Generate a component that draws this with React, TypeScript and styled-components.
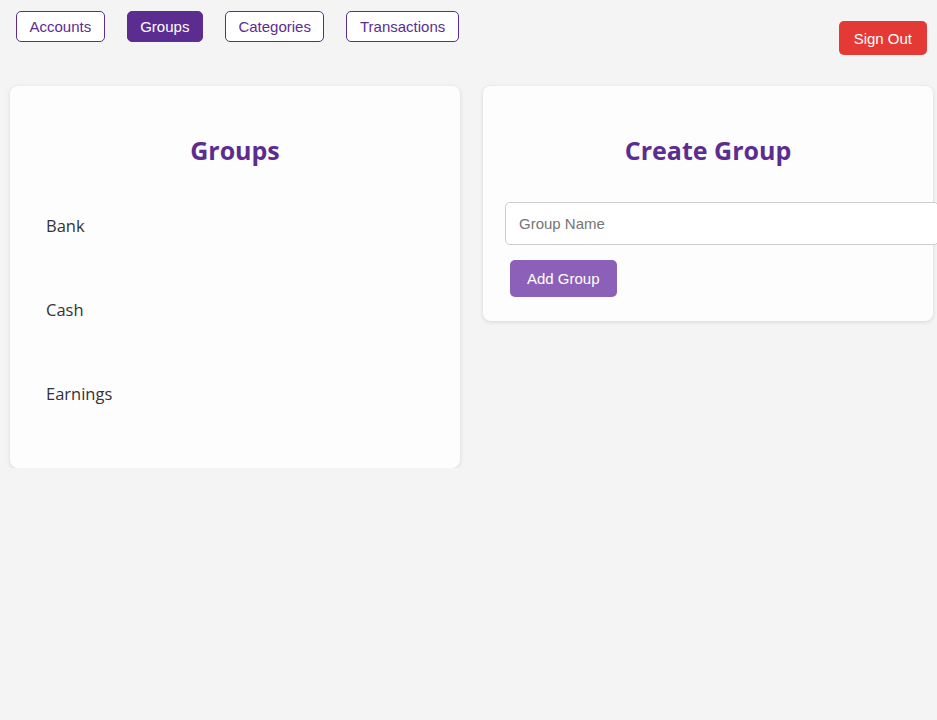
import React from "react";
import styled, { createGlobalStyle } from "styled-components";

const Global = createGlobalStyle`
  html, body { margin: 0; padding: 0; background: #f4f4f4; }
  body { font-family: "Liberation Sans", Arial, sans-serif; overflow: hidden; }
  * { box-sizing: border-box; }
`;

const Header = styled.header`
  display: flex;
  justify-content: space-between;
  align-items: flex-start;
  padding: 11px 10px 0 16px;
`;

const Nav = styled.nav`
  display: flex;
  gap: 22px;
`;

const NavButton = styled.button<{ $active?: boolean }>`
  font-family: "Liberation Sans", Arial, sans-serif;
  font-size: 15px;
  line-height: 17px;
  height: 31px;
  padding: 6px 12.5px;
  border: 1px solid #5c2d91;
  border-radius: 5px;
  background: ${(p) => (p.$active ? "#5c2d91" : "#ffffff")};
  color: ${(p) => (p.$active ? "#ffffff" : "#5c2d91")};
  cursor: pointer;
`;

const SignOut = styled.button`
  margin-top: 10px;
  height: 34px;
  padding: 0 15px;
  border: none;
  border-radius: 5px;
  background: #e53935;
  color: #ffffff;
  font-family: "Liberation Sans", Arial, sans-serif;
  font-size: 15px;
  cursor: pointer;
`;

const Columns = styled.main`
  display: grid;
  grid-template-columns: 450px 450px;
  gap: 23px;
  align-items: start;
  padding: 31px 10px 0 10px;
`;

const Card = styled.section<{ $padX: number }>`
  background: #fdfdfd;
  border-radius: 8px;
  box-shadow: 0 1px 4px rgba(0, 0, 0, 0.12);
  padding: 47px ${(p) => p.$padX}px 24px;
`;

const Title = styled.h2`
  margin: 0;
  text-align: center;
  font-family: "Open Sans", "Noto Sans", sans-serif;
  font-weight: 700;
  font-size: 25px;
  line-height: 34px;
  color: #5c2d91;
`;

const List = styled.ul`
  list-style: none;
  margin: 17px 0 8px;
  padding: 0;
`;

const Item = styled.li`
  font-family: "Open Sans", "Noto Sans", sans-serif;
  font-size: 16.5px;
  line-height: 24px;
  padding: 30px 0;
  color: #333333;
`;

const Form = styled.form`
  display: flex;
  flex-direction: column;
  align-items: flex-start;
  margin-top: 35px;
`;

const Input = styled.input`
  box-sizing: content-box;
  width: 100%;
  padding: 12px 13px;
  font-family: "Liberation Sans", Arial, sans-serif;
  font-size: 15px;
  line-height: 17px;
  border: 1px solid #cccccc;
  border-radius: 5px;
  background: #ffffff;
  color: #333;
  outline: none;
  &::placeholder { color: #757575; }
`;

const AddButton = styled.button`
  margin: 15px 0 0 5px;
  padding: 10px 17px;
  line-height: 17px;
  font-family: "Liberation Sans", Arial, sans-serif;
  font-size: 15px;
  border: none;
  border-radius: 5px;
  background: #8c5fb8;
  color: #ffffff;
  cursor: pointer;
`;

const groups = ["Bank", "Cash", "Earnings"];

export default function App() {
  return (
    <>
      <Global />
      <Header>
        <Nav>
          <NavButton>Accounts</NavButton>
          <NavButton $active>Groups</NavButton>
          <NavButton>Categories</NavButton>
          <NavButton>Transactions</NavButton>
        </Nav>
        <SignOut>Sign Out</SignOut>
      </Header>
      <Columns>
        <Card $padX={36}>
          <Title>Groups</Title>
          <List>
            {groups.map((g) => (
              <Item key={g}>{g}</Item>
            ))}
          </List>
        </Card>
        <Card $padX={22}>
          <Title>Create Group</Title>
          <Form onSubmit={(e) => e.preventDefault()}>
            <Input placeholder="Group Name" />
            <AddButton type="submit">Add Group</AddButton>
          </Form>
        </Card>
      </Columns>
    </>
  );
}
